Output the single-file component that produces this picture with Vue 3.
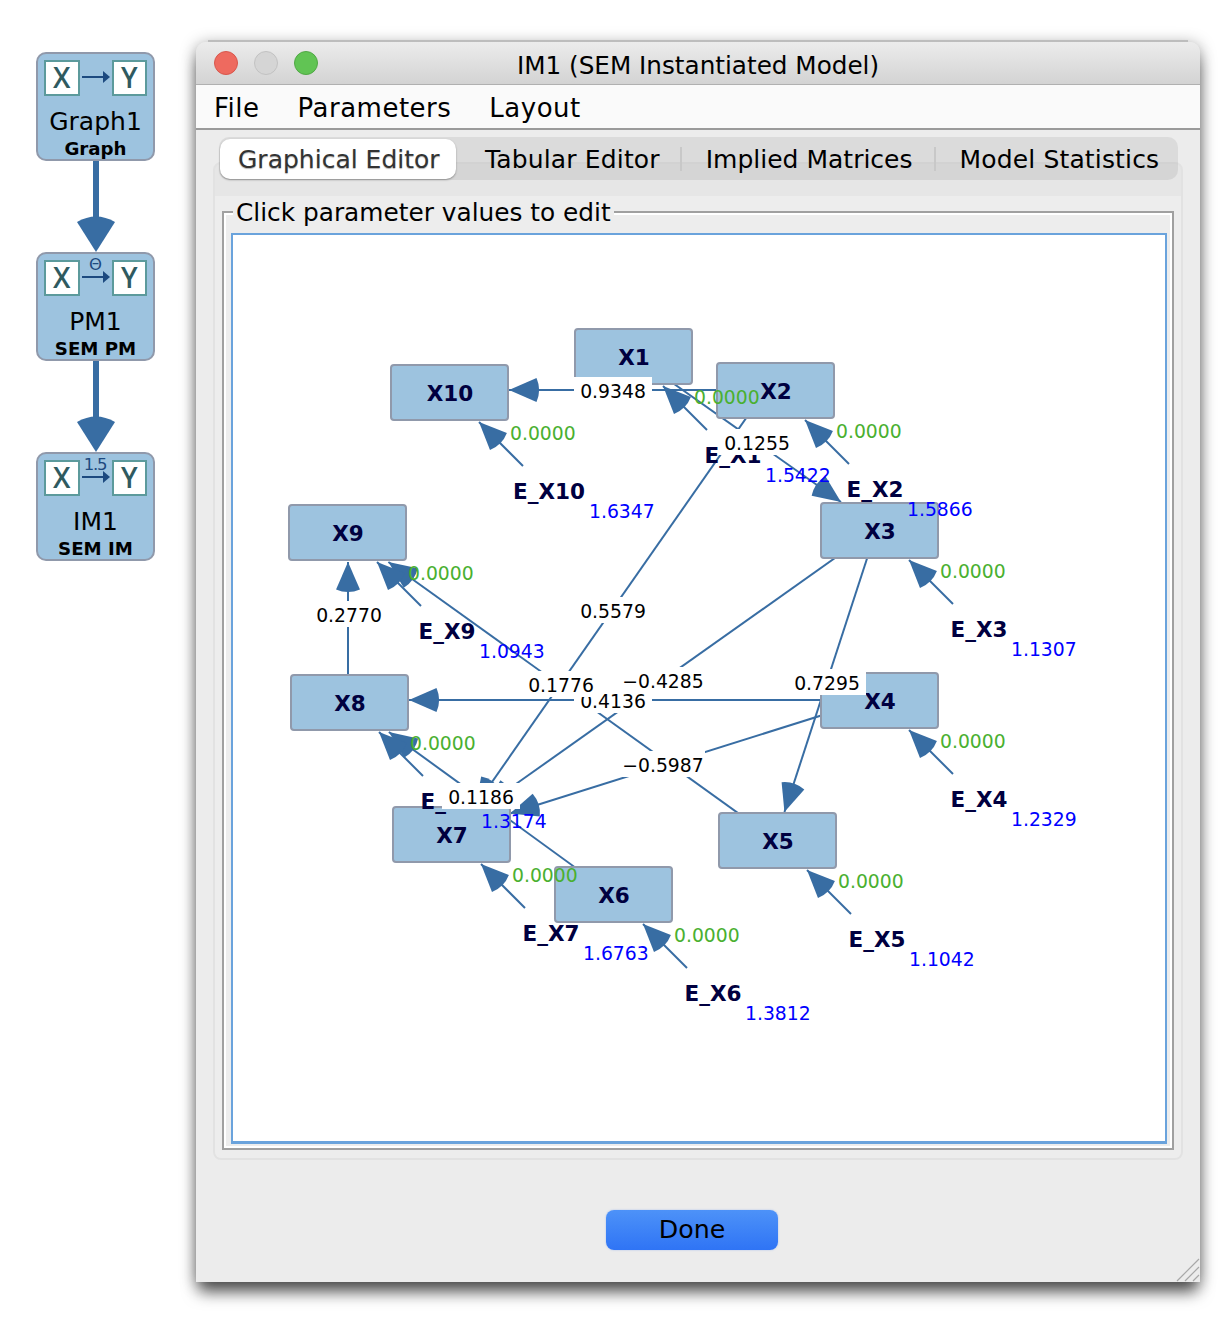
<template>
  <div class="page">
    <aside class="flow">
      <template v-for="(s, i) in sessions" :key="s.name">
        <div class="session">
          <div class="session-icon">
            <span class="io">X</span>
            <svg class="mini-arrow" width="32" height="36" viewBox="0 0 32 36">
              <text v-if="s.mark" class="mini-mark" x="15" y="10">{{ s.mark }}</text>
              <path d="M2 17H25" stroke="#1d4a80" stroke-width="2" />
              <path d="M23 11L30 17L23 23Z" fill="#1d4a80" />
            </svg>
            <span class="io">Y</span>
          </div>
          <div class="session-name">{{ s.name }}</div>
          <div class="session-type">{{ s.type }}</div>
        </div>
        <svg v-if="i < sessions.length - 1" class="link" width="119" height="91" viewBox="0 0 119 91">
          <path d="M60 0V70" stroke="#386da3" stroke-width="6" />
          <path d="M60 91L41 61Q60 50 79 61Z" fill="#386da3" />
        </svg>
      </template>
    </aside>

    <section class="window">
      <header class="titlebar">
        <div class="lights">
          <i class="light red"></i>
          <i class="light grey"></i>
          <i class="light green"></i>
        </div>
        <div class="title">IM1 (SEM Instantiated Model)</div>
      </header>
      <nav class="menubar">
        <span>File</span>
        <span>Parameters</span>
        <span>Layout</span>
      </nav>

      <div class="tabs">
        <div class="tab active">Graphical Editor</div>
        <div class="tab first">Tabular Editor</div>
        <b class="sep"></b>
        <div class="tab middle">Implied Matrices</div>
        <b class="sep"></b>
        <div class="tab">Model Statistics</div>
      </div>

      <div class="pane">
        <div class="pane-inner">
          <div class="titled">
            <span class="legend">Click parameter values to edit</span>
            <div class="canvas">
              <svg width="932" height="906" viewBox="233 235 932 906">
                <g class="edges">
                  <template v-for="e in edges" :key="e.key">
                    <path class="edge-line" :d="e.line" />
                    <path class="edge-head" :d="e.head" />
                  </template>
                </g>
                <g v-for="n in nodes" :key="n.name">
                  <rect class="node" :x="n.x" :y="n.y" width="117" height="55" rx="3" />
                  <text class="node-name" :x="n.cx" :y="n.cy">{{ n.name }}</text>
                  <text class="err-name" :x="n.cx + 99" :y="n.cy + 98">E_{{ n.name }}</text>
                </g>
                <g v-for="l in coefs" :key="l.text">
                  <rect class="coef-bg" :x="l.x - l.w / 2" :y="l.y - 13" :width="l.w" height="26" />
                  <text class="coef" :x="l.x" :y="l.y + 1">{{ l.text }}</text>
                </g>
                <g v-for="n in nodes" :key="n.name + 'v'">
                  <text class="mean" :x="n.cx + 60" :y="n.cy + 40">0.0000</text>
                  <text class="variance" :x="n.cx + (n.name === 'X10' ? 139 : 131)" :y="n.cy + 118">{{ n.variance }}</text>
                </g>
              </svg>
            </div>
          </div>
        </div>
      </div>

      <footer class="actions">
        <button class="done">Done</button>
        <svg class="grip" width="24" height="24" viewBox="0 0 24 24">
          <path d="M1 23L23 1M9 23L23 9M17 23L23 17" stroke="#a8a8a8" stroke-width="1.2" />
        </svg>
      </footer>
    </section>
  </div>
</template>

<script setup>
const sessions = [
  { name: 'Graph1', type: 'Graph', mark: '' },
  { name: 'PM1', type: 'SEM PM', mark: 'Θ' },
  { name: 'IM1', type: 'SEM IM', mark: '1.5' }
]

const W = 118
const H = 56

const nodes = [
  ['X1', 575, 329, '1.5422'],
  ['X2', 717, 363, '1.5866'],
  ['X3', 821, 503, '1.1307'],
  ['X4', 821, 673, '1.2329'],
  ['X5', 719, 813, '1.1042'],
  ['X6', 555, 867, '1.3812'],
  ['X7', 393, 807, '1.6763'],
  ['X8', 291, 675, '1.3174'],
  ['X9', 289, 505, '1.0943'],
  ['X10', 391, 365, '1.6347']
].map(([name, x, y, variance]) => ({ name, x, y, variance, cx: x + W / 2, cy: y + H / 2 }))

const byName = Object.fromEntries(nodes.map((n) => [n.name, n]))

// where the ray from (sx,sy) to (cx,cy) enters a node box
function tipOn(sx, sy, cx, cy) {
  const dx = cx - sx
  const dy = cy - sy
  const t = Math.max(Math.abs(dx) / (W / 2), Math.abs(dy) / (H / 2 + 1))
  return [cx - dx / t, cy - dy / t]
}

function headPath(tx, ty, sx, sy) {
  const r = 30
  const a = 0.41
  const base = Math.atan2(sy - ty, sx - tx)
  const p1 = [tx + r * Math.cos(base + a), ty + r * Math.sin(base + a)]
  const p2 = [tx + r * Math.cos(base - a), ty + r * Math.sin(base - a)]
  return `M${tx} ${ty}L${p1[0]} ${p1[1]}A${r} ${r} 0 0 0 ${p2[0]} ${p2[1]}Z`
}

function makeEdge(key, sx, sy, cx, cy) {
  const [tx, ty] = tipOn(sx, sy, cx, cy)
  return { key, line: `M${sx} ${sy}L${tx} ${ty}`, head: headPath(tx, ty, sx, sy) }
}

// [from x, from y, to x, to y], read off the reference; edges don't quite run centre to centre
const directed = [
  [636, 357, 882, 531],
  [765, 391, 455, 835],
  [777, 841, 348, 533],
  [873, 531, 444, 835],
  [876, 531, 775, 841],
  [880, 697, 451, 832],
  [613, 895, 349, 703],
  [776, 390, 450, 390],
  [880, 700, 350, 700],
  [348, 703, 348, 533]
]

const edges = [
  ...directed.map(([sx, sy, cx, cy], i) => makeEdge('d' + i, sx, sy, cx, cy)),
  ...nodes.map((n) => makeEdge('E' + n.name, n.cx + 73, n.cy + 73, n.cx, n.cy))
]

const coefs = [
  { text: '0.9348', x: 613, y: 390, w: 78 },
  { text: '0.1255', x: 757, y: 442, w: 78 },
  { text: '0.5579', x: 613, y: 610, w: 78 },
  { text: '0.2770', x: 349, y: 614, w: 78 },
  { text: '0.4136', x: 613, y: 700, w: 78 },
  { text: '0.1776', x: 561, y: 684, w: 78 },
  { text: '−0.4285', x: 663, y: 680, w: 84 },
  { text: '0.7295', x: 827, y: 682, w: 78 },
  { text: '−0.5987', x: 663, y: 764, w: 84 },
  { text: '0.1186', x: 481, y: 796, w: 78 }
]
</script>

<style>
html,
body {
  margin: 0;
  background: #fff;
}
</style>

<style scoped>
.page {
  width: 1230px;
  height: 1318px;
  display: flex;
  align-items: flex-start;
  box-sizing: border-box;
  padding: 42px 0 0 36px;
  overflow: hidden;
  font-family: "DejaVu Sans", sans-serif;
  color: #000;
}

.flow {
  width: 119px;
  margin-top: 10px;
  display: flex;
  flex-direction: column;
}

.session {
  height: 109px;
  box-sizing: border-box;
  background: #9dc3df;
  border: 2px solid #9099ab;
  border-radius: 10px;
  padding: 6px 6px 0;
  text-align: center;
}

.session-icon {
  display: flex;
  height: 36px;
}

.io {
  width: 36px;
  height: 36px;
  box-sizing: border-box;
  background: #fff;
  border: 2px solid #5c9a9c;
  color: #2f5a5f;
  font-size: 28px;
  font-weight: 600;
  line-height: 31px;
  font-family: "Open Sans", sans-serif;
}

.mini-arrow {
  overflow: visible;
}

.mini-mark {
  font-size: 16.5px;
  letter-spacing: -1.2px;
  fill: #1d4a80;
  text-anchor: middle;
}

.session-name {
  margin-top: 11px;
  font-size: 25px;
  line-height: 30px;
}

.session-type {
  font-size: 18.2px;
  line-height: 24px;
  font-weight: 700;
}

.link {
  display: block;
}

.window {
  position: relative;
  width: 1004px;
  height: 1240px;
  margin-left: 41px;
  background: #ececec;
  border-radius: 10px 10px 0 0;
  box-shadow: 0 13px 16px -3px rgba(0, 0, 0, 0.6), 0 2px 16px rgba(0, 0, 0, 0.38);
}

.window::before {
  content: "";
  position: absolute;
  left: 12px;
  right: 12px;
  top: -2px;
  height: 2px;
  background: #bdbdbd;
}

.titlebar {
  position: relative;
  height: 43px;
  box-sizing: border-box;
  background: linear-gradient(#ececec, #d3d3d3);
  border-bottom: 1px solid #b0b0b0;
  border-radius: 10px 10px 0 0;
  display: flex;
  align-items: center;
  justify-content: center;
}

.lights {
  position: absolute;
  left: 18px;
  top: 9px;
  display: flex;
  gap: 16px;
}

.light {
  width: 24px;
  height: 24px;
  box-sizing: border-box;
  border-radius: 50%;
  border: 1px solid transparent;
}

.red {
  background: #ee6a5f;
  border-color: #d8574c;
}

.grey {
  background: #d5d5d5;
  border-color: #c2c2c2;
}

.green {
  background: #61c454;
  border-color: #50a845;
}

.title {
  font-size: 24.7px;
  margin-top: 4px;
}

.menubar {
  height: 45px;
  box-sizing: border-box;
  background: #fafafa;
  border-bottom: 2px solid #9a9a9a;
  display: flex;
  align-items: center;
  gap: 38px;
  padding: 3px 0 0 18px;
  font-size: 26px;
  letter-spacing: 0.5px;
}

.tabs {
  position: relative;
  z-index: 1;
  width: 959px;
  height: 43px;
  box-sizing: border-box;
  margin: 7px 0 0 23px;
  padding: 2px 0 0 1px;
  background: rgba(0, 0, 0, 0.07);
  border-radius: 10px;
  display: flex;
  align-items: flex-start;
  font-size: 25px;
  letter-spacing: 0.15px;
}

.tab {
  flex: none;
  height: 40px;
  line-height: 41px;
  padding: 0 21px 0 24px;
  white-space: nowrap;
}

.tab.first {
  padding: 0 20px 0 29px;
}

.tab.middle {
  letter-spacing: 0;
}

.tab.active {
  width: 236px;
  box-sizing: border-box;
  padding: 0 0 0 18px;
  background: #fff;
  border-radius: 10px;
  box-shadow: 0 1px 2px rgba(0, 0, 0, 0.35);
  color: #333;
  letter-spacing: 0;
  text-shadow: 0 1px 1px rgba(0, 0, 0, 0.3);
}

.sep {
  flex: none;
  width: 2px;
  height: 24px;
  margin-top: 8px;
  background: #c8c8c8;
}

.pane {
  width: 970px;
  height: 998px;
  box-sizing: border-box;
  margin: -18px 0 0 17px;
  border: 2px solid #e2e2e2;
  border-radius: 8px;
  background: #e6e6e6;
  padding-top: 32px;
}

.pane-inner {
  height: 962px;
  box-sizing: border-box;
  background: #ededed;
  border-radius: 0 0 6px 6px;
  padding: 15px 7px 0;
}

.titled {
  position: relative;
  height: 939px;
  box-sizing: border-box;
  border: 2px solid #a0a0a0;
  outline: 2px solid #fff;
  outline-offset: -4px;
  padding: 20px 5px 0 7px;
}

.legend {
  position: absolute;
  left: 9px;
  top: -15px;
  padding: 0 3px;
  background: #ededed;
  font-size: 24.8px;
  line-height: 30px;
  white-space: nowrap;
}

.canvas {
  height: 911px;
  box-sizing: border-box;
  background: #fff;
  border: 2px solid #6aa3dc;
  border-bottom-width: 3px;
  overflow: hidden;
}

.canvas svg {
  display: block;
}

.edge-line {
  stroke: #386da3;
  stroke-width: 2;
  fill: none;
}

.edge-head {
  fill: #386da3;
}

.node {
  fill: #9dc3df;
  stroke: #9099ab;
  stroke-width: 2;
}

.node-name,
.err-name {
  font-size: 21.5px;
  font-weight: 700;
  fill: #000040;
  text-anchor: middle;
  dominant-baseline: central;
}

.coef-bg {
  fill: #fff;
}

.coef {
  font-size: 18.8px;
  fill: #000;
  text-anchor: middle;
  dominant-baseline: central;
}

.mean,
.variance {
  font-size: 18.8px;
  dominant-baseline: central;
}

.mean {
  fill: #4ab030;
}

.variance {
  fill: #0000ff;
}

.actions {
  display: flex;
  justify-content: flex-start;
  padding: 50px 0 0 410px;
}

.done {
  width: 172px;
  height: 40px;
  border: none;
  border-radius: 8px;
  background: linear-gradient(#4d92f8, #2f74f5);
  box-shadow: 0 0 2px rgba(60, 120, 240, 0.4);
  font-family: inherit;
  font-size: 25.3px;
  color: #000;
  padding: 0 0 2px;
}

.grip {
  position: absolute;
  right: 0;
  bottom: 0;
}
</style>
